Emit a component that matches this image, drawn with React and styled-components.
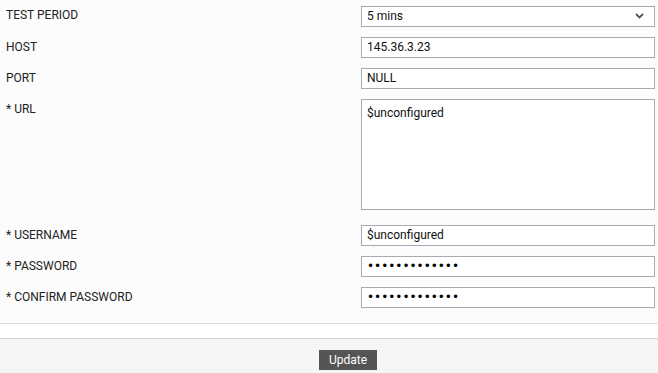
import React from "react";
import styled, { createGlobalStyle } from "styled-components";

const GlobalStyle = createGlobalStyle`
  html, body {
    margin: 0;
    padding: 0;
    background: #ffffff;
    font-family: Roboto, "Liberation Sans", Arial, sans-serif;
  }
`;

const fields = [
  { label: "HOST", value: "145.36.3.23" },
  { label: "PORT", value: "NULL" },
];

const credentials = [
  { label: "* USERNAME", value: "$unconfigured", type: "text" },
  { label: "* PASSWORD", value: "secretpasswd1", type: "password" },
  { label: "* CONFIRM PASSWORD", value: "secretpasswd1", type: "password" },
];

const App = () => {
  return (
    <>
      <GlobalStyle />
      <StyledPage>
        <StyledForm>
          <StyledRow>
            <StyledLabel>TEST PERIOD</StyledLabel>
            <StyledSelectWrap>
              <StyledSelect defaultValue="5">
                <option value="1">1 min</option>
                <option value="5">5 mins</option>
                <option value="10">10 mins</option>
              </StyledSelect>
              <StyledChevron width="9" height="6" viewBox="0 0 9 6">
                <path
                  d="M1 1 L4.5 4.5 L8 1"
                  fill="none"
                  stroke="#555"
                  strokeWidth="1.8"
                />
              </StyledChevron>
            </StyledSelectWrap>
          </StyledRow>
          {fields.map(f => (
            <StyledRow key={f.label}>
              <StyledLabel>{f.label}</StyledLabel>
              <StyledInput type="text" defaultValue={f.value} />
            </StyledRow>
          ))}
          <StyledRow tall>
            <StyledLabel>* URL</StyledLabel>
            <StyledTextArea defaultValue="$unconfigured" />
          </StyledRow>
          {credentials.map(f => (
            <StyledRow key={f.label}>
              <StyledLabel>{f.label}</StyledLabel>
              <StyledInput
                type={f.type}
                secret={f.type === "password"}
                defaultValue={f.value}
              />
            </StyledRow>
          ))}
        </StyledForm>
        <StyledSpacer />
        <StyledFooter>
          <StyledButton type="button">Update</StyledButton>
        </StyledFooter>
      </StyledPage>
    </>
  );
};

const StyledPage = styled.div`
  width: 100%;
  min-height: 373px;
  display: flex;
  flex-direction: column;
  background: #f5f5f5;
`;

const StyledForm = styled.div`
  background: #fcfcfc;
  padding: 0 3px 10px 0;
  border-bottom: 1px solid #dedede;
`;

const StyledRow = styled.div`
  display: grid;
  grid-template-columns: 361px 1fr;
  align-items: start;
  padding: ${props => (props.tall ? "5px 0 10px" : "5px 0")};
  min-height: 20px;
`;

const StyledLabel = styled.div`
  padding-left: 6px;
  font-size: 12px;
  line-height: 21px;
  color: #222;
  ${StyledRow}:first-child & {
    line-height: 20px;
  }
`;

const fieldBase = `
  box-sizing: border-box;
  width: 100%;
  margin: 0;
  border: 1px solid #a9a9b6;
  border-radius: 0;
  background: #fff;
  font-family: Roboto, "Liberation Sans", Arial, sans-serif;
  font-size: 12px;
  color: #111;
  outline: none;
`;

const StyledInput = styled.input`
  ${fieldBase}
  height: 21px;
  padding: 0 5px;
  ${props =>
    props.secret &&
    `
    font-family: "DejaVu Sans", sans-serif;
    font-size: 12px;
    color: #000;
  `}
`;

const StyledTextArea = styled.textarea`
  ${fieldBase}
  display: block;
  height: 111px;
  padding: 6px 5px;
  resize: none;
  line-height: 14px;
`;

const StyledSelectWrap = styled.div`
  position: relative;
`;

const StyledSelect = styled.select`
  ${fieldBase}
  appearance: none;
  height: 21px;
  padding: 0 5px;
`;

const StyledChevron = styled.svg`
  position: absolute;
  right: 11px;
  top: 8px;
  pointer-events: none;
`;

const StyledSpacer = styled.div`
  height: 14px;
  background: #fff;
  border-bottom: 1px solid #d6d6d6;
`;

const StyledFooter = styled.div`
  flex: 1;
  display: flex;
  justify-content: center;
  align-items: flex-start;
  padding: 11px 0 0 38px;
  background: #f5f5f5;
`;

const StyledButton = styled.button`
  width: 58px;
  height: 20px;
  border: none;
  border-radius: 0;
  background: #555;
  color: #fff;
  font-family: Roboto, "Liberation Sans", Arial, sans-serif;
  font-size: 12px;
  padding: 0;
`;

export default App;
